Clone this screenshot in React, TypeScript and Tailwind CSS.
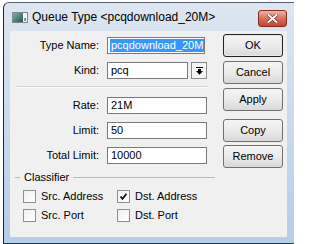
import React from 'react'

const font = { fontFamily: '"Liberation Sans", Arial, sans-serif' }

function Field({ label, value, width = 'w-[100px]', selected }: { label: string; value: string; width?: string; selected?: boolean }) {
  return (
    <div className="flex h-[17px] items-center">
      <span className="w-[90px] pr-[1px] text-right">{label}</span>
      <div className={`ml-[7px] flex h-[17px] items-center border border-[#7a7a7a] bg-white pl-[2px] ${width}`}>
        {selected ? <span className="bg-[#3399ff] px-[1px] leading-[13px] text-white">{value}</span> : <span className="pl-[1px]">{value}</span>}
      </div>
    </div>
  )
}

function Btn({ children, primary, className = '' }: { children: React.ReactNode; primary?: boolean; className?: string }) {
  return (
    <div className={`flex h-[23px] w-[60px] items-center justify-center rounded-[3px] border bg-gradient-to-b from-[#f4f4f4] via-[#ebebeb] to-[#d8d8d8] ${primary ? 'border-[#222] shadow-[inset_0_0_0_1px_#e8e8e8]' : 'border-[#707070]'} ${className}`}>
      {children}
    </div>
  )
}

function Check({ label, checked }: { label: string; checked?: boolean }) {
  return (
    <div className="flex h-[13px] items-center">
      <div className="flex h-[13px] w-[13px] items-center justify-center border border-[#8e8f8f] bg-gradient-to-br from-[#f0f0f0] to-white">
        {checked ? (
          <svg width="9" height="9" viewBox="0 0 9 9">
            <path d="M1.5 4.5 L3.5 6.8 L7.5 1.8" fill="none" stroke="#111" strokeWidth="1.8" />
          </svg>
        ) : null}
      </div>
      <span className="ml-[5px]">{label}</span>
    </div>
  )
}

export default function App() {
  return (
    <div className="h-[244px] w-[294px] overflow-hidden bg-white pt-[2px] text-[11px] text-black" style={font}>
      <div className="ml-[3px] h-[242px] w-[300px] rounded-tl-[6px] border-l border-t border-b border-l-[#222] border-t-[#5a6470] border-b-[#1f3a4a] bg-gradient-to-b from-[#dde6f0] via-[#c9daee] to-[#b4cdea]">
        {/* title bar */}
        <div className="flex h-[28px] items-center">
          <svg className="ml-[8px]" width="16" height="11" viewBox="0 0 16 11">
            <defs>
              <linearGradient id="ic" x1="0" y1="0" x2="1" y2="1">
                <stop offset="0" stopColor="#7fb0a8" />
                <stop offset="1" stopColor="#1e5a4a" />
              </linearGradient>
            </defs>
            <rect x="0.5" y="0.5" width="15" height="10" fill="#f4f6f8" stroke="#7c8790" />
            <rect x="1" y="1" width="10" height="9" fill="url(#ic)" />
            <rect x="12.5" y="6" width="1.2" height="3" fill="#3a4a50" />
          </svg>
          <span className="ml-[4px] text-[12px] leading-none">Queue Type &lt;pcqdownload_20M&gt;</span>
          <div className="ml-auto mr-[16px] mt-[3px] flex h-[17px] w-[29px] items-center justify-center rounded-[3px] border border-[#8b2c1e] bg-gradient-to-b from-[#eab3a4] via-[#d8705a] to-[#c2432b]">
            <svg width="11" height="9" viewBox="0 0 11 9">
              <path d="M1.5 1 L9.5 8 M9.5 1 L1.5 8" stroke="#6b2a20" strokeWidth="3.2" strokeLinecap="square" />
              <path d="M1.5 1 L9.5 8 M9.5 1 L1.5 8" stroke="#fff" strokeWidth="2" strokeLinecap="square" />
            </svg>
          </div>
        </div>
        {/* client */}
        <div className="ml-[6px] flex h-[206px] w-[277px] bg-[#f0f0f0]">
          <div className="flex w-[207px] flex-col">
            <div className="mt-[6px]">
              <Field label="Type Name:" value="pcqdownload_20M" width="w-[98px]" selected />
            </div>
            <div className="mt-[8px] flex h-[17px] items-center">
              <span className="w-[90px] pr-[1px] text-right">Kind:</span>
              <div className="ml-[7px] flex h-[17px] w-[81px] items-center border border-[#7a7a7a] bg-white pl-[3px]">pcq</div>
              <div className="ml-[3px] flex h-[17px] w-[16px] items-center justify-center border border-[#8a8a8a] bg-[#f4f4f4]">
                <svg width="7" height="8" viewBox="0 0 7 8">
                  <rect x="0" y="0" width="7" height="1" fill="#000" />
                  <rect x="2" y="2" width="3" height="2" fill="#000" />
                  <polygon points="0,4 7,4 3.5,7.8" fill="#000" />
                </svg>
              </div>
            </div>
            <div className="ml-[7px] mt-[7px] h-[2px] w-[190px] border-t border-b border-t-[#d0d0d0] border-b-white" />
            <div className="mt-[9px]">
              <Field label="Rate:" value="21M" />
            </div>
            <div className="mt-[8px]">
              <Field label="Limit:" value="50" />
            </div>
            <div className="mt-[8px]">
              <Field label="Total Limit:" value="10000" />
            </div>
            <div className="mt-[7px] flex h-[13px] items-center">
              <div className="ml-[5px] h-px w-[5px] bg-[#b8b8b8]" />
              <span className="ml-[4px]">Classifier</span>
              <div className="ml-[4px] h-px w-[142px] bg-[#b8b8b8]" />
            </div>
            <div className="mt-[6px] flex pl-[13px]">
              <div className="w-[94px]"><Check label="Src. Address" /></div>
              <Check label="Dst. Address" checked />
            </div>
            <div className="mt-[6px] flex pl-[13px]">
              <div className="w-[94px]"><Check label="Src. Port" /></div>
              <Check label="Dst. Port" />
            </div>
          </div>
          <div className="ml-[6px] flex flex-col">
            <Btn primary className="mt-[3px]">OK</Btn>
            <Btn className="mt-[4px]">Cancel</Btn>
            <Btn className="mt-[4px]">Apply</Btn>
            <Btn className="mt-[8px]">Copy</Btn>
            <Btn className="mt-[3px]">Remove</Btn>
          </div>
        </div>
      </div>
    </div>
  )
}
